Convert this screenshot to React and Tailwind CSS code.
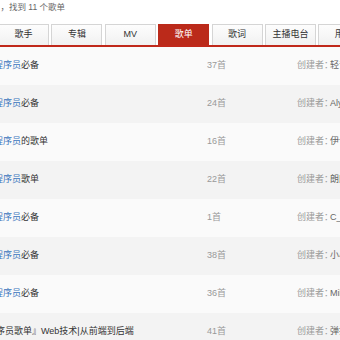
import React from "react";

const tabs = ["歌手", "专辑", "MV", "歌单", "歌词", "主播电台", "用户"];

const rows = [
  { hl: "程序员", rest: "必备", count: "37首", creator: "轻音乐小站" },
  { hl: "程序员", rest: "必备", count: "24首", creator: "Alyssa" },
  { hl: "程序员", rest: "的歌单", count: "16首", creator: "伊卡洛斯" },
  { hl: "程序员", rest: "歌单", count: "22首", creator: "朗朗乾坤" },
  { hl: "程序员", rest: "必备", count: "1首", creator: "C_coder" },
  { hl: "程序员", rest: "必备", count: "38首", creator: "小小码农" },
  { hl: "程序员", rest: "必备", count: "36首", creator: "Mike" },
  { hl: "", rest: "『程序员歌单』Web技术|从前端到后端", count: "41首", creator: "弹指一挥", shift: true },
];

export default function App() {
  return (
    <div className="w-[340px] h-[340px] overflow-hidden bg-white text-[9px] font-['Liberation_Sans','Noto_Sans_CJK_SC',sans-serif]">
      <div className="h-[24px] pt-[1px] leading-[12px] text-[8.5px] text-[#666] ml-[-8px] whitespace-nowrap">
        了，找到 11 个歌单
      </div>
      <div className="border-b-2 border-[#c0281a] ml-[-2px] w-[400px]">
        <div className="flex gap-[2.4px]">
          {tabs.map((t, i) => (
            <div
              key={t}
              className={
                i === 3
                  ? "w-[51px] h-[21px] shrink-0 flex items-center justify-center bg-[#bb2a1a] text-white border border-[#bb2a1a] border-b-0"
                  : "w-[51px] h-[21px] shrink-0 flex items-center justify-center bg-gradient-to-b from-[#fdfdfd] to-[#f1f1f1] text-[#333] border border-[#d5d5d5] border-b-0"
              }
            >
              {t}
            </div>
          ))}
        </div>
      </div>
      <div className="flex flex-col">
        {rows.map((r, i) => (
          <div
            key={i}
            className={
              (i % 2 === 0 ? "bg-[#fafafa]" : "bg-[#f3f3f3]") +
              " h-[38px] flex items-center whitespace-nowrap"
            }
          >
            <div className="w-[207px] shrink-0 overflow-visible">
              <div className={r.shift ? "ml-[-22px]" : "ml-[-6px]"}>
                {r.hl && <span className="text-[#3a75bd]">{r.hl}</span>}
                <span className="text-[#333]">{r.rest}</span>
              </div>
            </div>
            <div className="w-[90px] shrink-0 text-[#999]">{r.count}</div>
            <div className="shrink-0 flex text-[#999]">
              <span>创建者</span>
              <span className="inline-block w-[6px] overflow-hidden">：</span>
              <span className="text-[#666]">{r.creator}</span>
            </div>
          </div>
        ))}
      </div>
    </div>
  );
}
